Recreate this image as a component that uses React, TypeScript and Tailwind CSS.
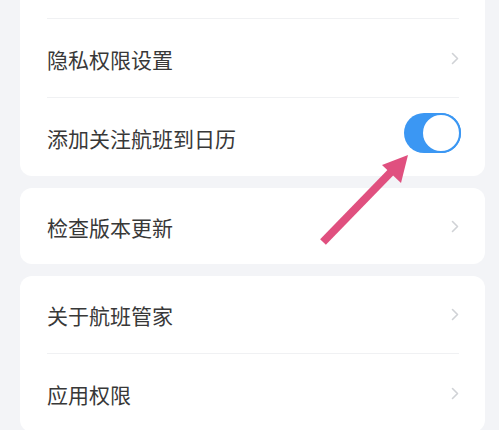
import React from "react";

const font = { fontFamily: '"Noto Sans CJK SC", "Noto Sans", sans-serif' };

function Chevron() {
  return (
    <svg width="8" height="13" viewBox="0 0 8 13" className="shrink-0">
      <path d="M1.5 1.5 L6.5 6.5 L1.5 11.5" fill="none" stroke="#d0d2d6" strokeWidth="1.6" strokeLinecap="round" strokeLinejoin="round" />
    </svg>
  );
}

function Row({ label, right, divider, h = "h-[78px]" }: { label: string; right?: React.ReactNode; divider?: boolean; h?: string }) {
  return (
    <div className="px-[27px] pr-[26px]">
      <div className={`flex items-center justify-between ${h} ${divider ? "border-b border-[#f0f1f3]" : ""}`}>
        <span className="text-[21px] text-[#383838] leading-none pt-[2px]">{label}</span>
        {right ?? <Chevron />}
      </div>
    </div>
  );
}

function Toggle() {
  return (
    <div className="relative w-[57px] h-[40px] rounded-full bg-[#3b97f3] -mr-[2px] mb-[8px]">
      <div className="absolute right-0 top-0 w-[40px] h-[40px] rounded-full bg-white border-[2px] border-[#3b97f3]" />
    </div>
  );
}

export default function App() {
  return (
    <div className="relative w-[499px] h-[430px] overflow-hidden bg-[#f3f4f7]" style={font}>
      <div className="flex flex-col gap-[12px] pl-[20px] pr-[14px]">
        <div className="bg-white rounded-[12px] -mt-[20px]">
          <div className="px-[27px] pr-[26px]">
            <div className="h-[39px] border-b border-[#f0f1f3]" />
          </div>
          <Row label="隐私权限设置" divider h="h-[79px]" />
          <Row label="添加关注航班到日历" right={<Toggle />} />
        </div>
        <div className="bg-white rounded-[12px]">
          <Row label="检查版本更新" h="h-[76px]" />
        </div>
        <div className="bg-white rounded-[12px]">
          <Row label="关于航班管家" divider />
          <Row label="应用权限" />
        </div>
      </div>
      <svg className="absolute left-0 top-0 pointer-events-none" width="499" height="430" viewBox="0 0 499 430">
        <line x1="323" y1="242" x2="392" y2="171" stroke="#e0507f" strokeWidth="8" strokeLinecap="butt" />
        <polygon points="408,155 382,165 401,183" fill="#e0507f" />
      </svg>
    </div>
  );
}
